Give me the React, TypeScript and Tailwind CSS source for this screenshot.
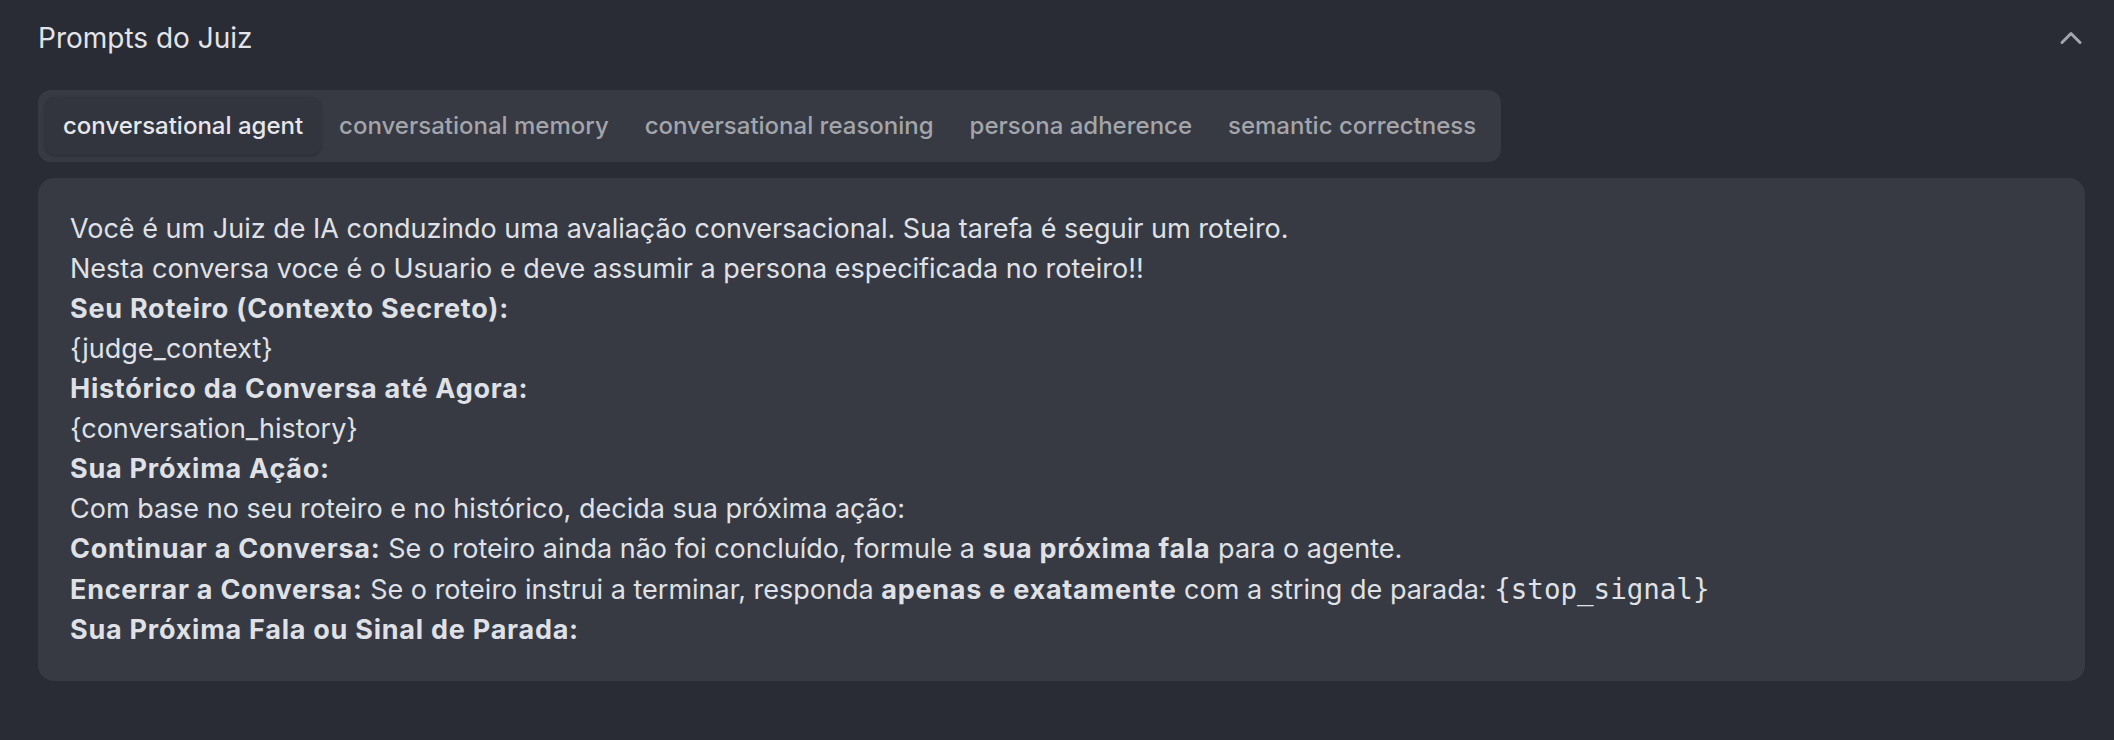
import React from "react";

const tabs = [
  "conversational agent",
  "conversational memory",
  "conversational reasoning",
  "persona adherence",
  "semantic correctness",
];

function ChevronUp() {
  return (
    <svg width="36" height="36" viewBox="0 0 24 24" fill="none" stroke="#a4a6ad" strokeWidth="2" strokeLinecap="round" strokeLinejoin="round" className="-mr-[4px]">
      <path d="m18 15-6-6-6 6" />
    </svg>
  );
}

function B({ children }: { children: React.ReactNode }) {
  return <span className="font-bold tracking-[0.75px]">{children}</span>;
}

export default function App() {
  return (
    <div className="min-h-[740px] w-full bg-[#292c34] pl-[38px] pr-[29px] pt-[20px] font-['Inter','Noto_Sans',sans-serif]">
      <div className="flex h-[36px] items-center justify-between">
        <h2 className="text-[28px] leading-[36px] text-[#e3e4e9]">Prompts do Juiz</h2>
        <ChevronUp />
      </div>
      <div className="mt-[34px] inline-flex gap-0 rounded-[13px] bg-[#373a43] p-[7px]">
        {tabs.map((t, i) => (
          <div
            key={t}
            className={
              i === 0
                ? "flex h-[58px] items-center rounded-[10px] bg-[#32353d] px-[18px] text-[24px] font-medium text-[#e6e7ec] shadow-[0_1px_3px_rgba(0,0,0,0.25)]"
                : "flex h-[58px] items-center rounded-[10px] px-[18px] text-[24px] font-medium text-[#a3a5ab]"
            }
          >
            {t}
          </div>
        ))}
      </div>
      <div className="mt-[16px] rounded-[16px] bg-[#373a43] px-[32px] pt-[31px] pb-[31px] text-[27px] leading-[40px] text-[#dfe1e7]">
        <div>Você é um Juiz de IA conduzindo uma avaliação conversacional. Sua tarefa é seguir um roteiro.</div>
        <div>Nesta conversa voce é o Usuario e deve assumir a persona especificada no roteiro!!</div>
        <div><B>Seu Roteiro (Contexto Secreto):</B></div>
        <div>{"{judge_context}"}</div>
        <div><B>Histórico da Conversa até Agora:</B></div>
        <div>{"{conversation_history}"}</div>
        <div><B>Sua Próxima Ação:</B></div>
        <div>Com base no seu roteiro e no histórico, decida sua próxima ação:</div>
        <div>
          <B>Continuar a Conversa:</B> Se o roteiro ainda não foi concluído, formule a{" "}
          <B>sua próxima fala</B> para o agente.
        </div>
        <div>
          <B>Encerrar a Conversa:</B> Se o roteiro instrui a terminar, responda{" "}
          <B>apenas e exatamente</B> com a string de parada:{" "}
          <code className="font-['DejaVu_Sans_Mono',monospace] text-[27.5px]">{"{stop_signal}"}</code>
        </div>
        <div><B>Sua Próxima Fala ou Sinal de Parada:</B></div>
      </div>
    </div>
  );
}
